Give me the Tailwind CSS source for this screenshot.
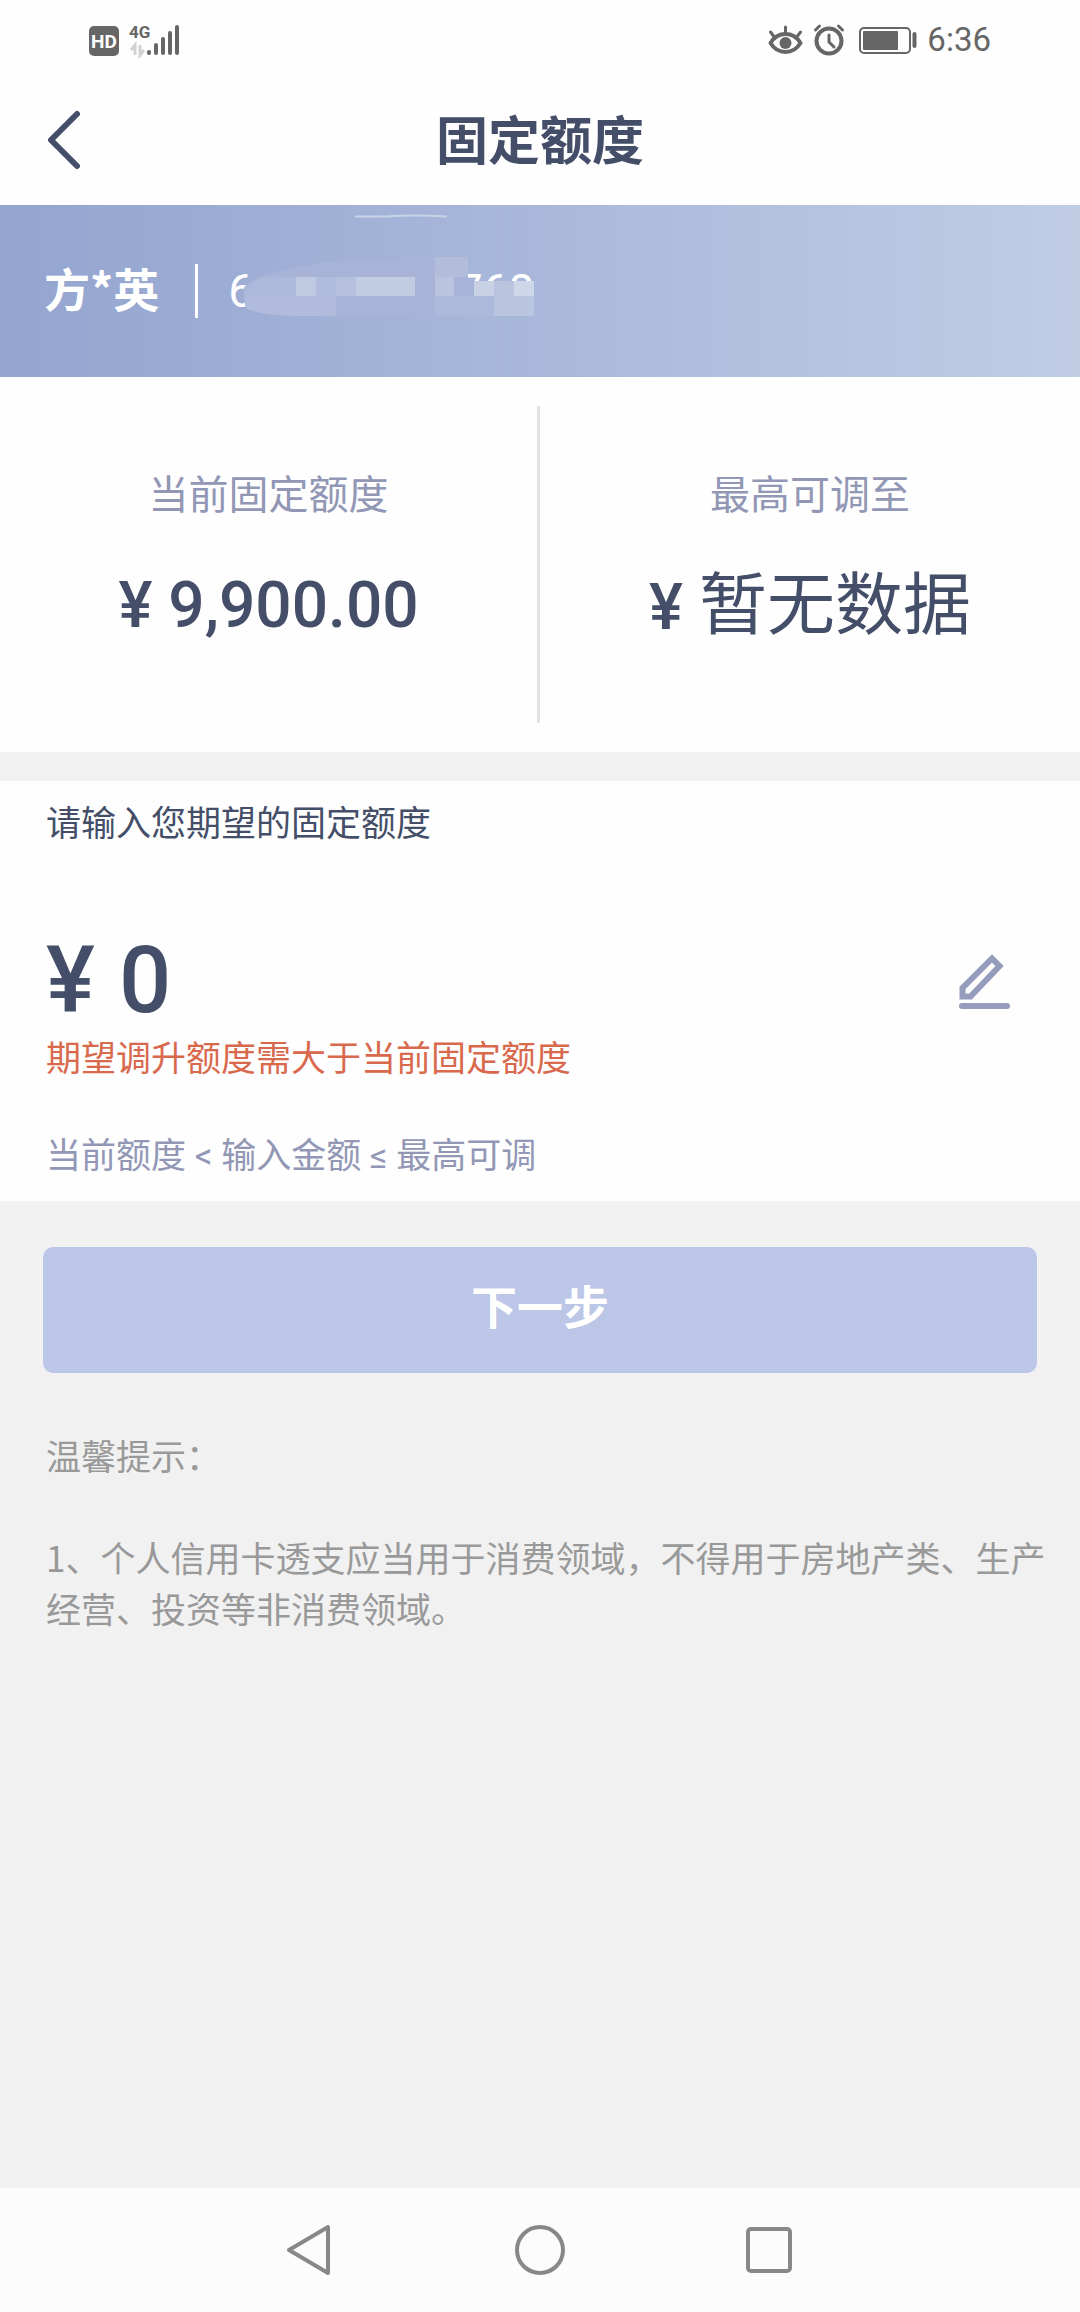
<!DOCTYPE html>
<html lang="zh-CN">
<head>
<meta charset="utf-8">
<meta name="viewport" content="width=device-width, initial-scale=1">
<title>固定额度</title>
<script src="https://cdn.jsdelivr.net/npm/@tailwindcss/browser@4"></script>
</head>
<body class="flex min-h-screen flex-col bg-[#f1f1f1] font-['Noto_Sans_CJK_SC',sans-serif] text-[#444e68]">

<!-- Status bar -->
<div class="flex h-20 items-center justify-between bg-[#fefefe] pr-[89px] pl-[88px] text-[#666]">
  <svg class="h-10 w-24" viewBox="88 20 96 40" fill="currentColor" role="img" aria-label="HD 4G">
    <rect x="89" y="26" width="30" height="30" rx="5"/>
    <text x="104" y="48" text-anchor="middle" font-family="Roboto, sans-serif" font-weight="700" font-size="19" fill="#fefefe">HD</text>
    <text x="129" y="38" font-family="Roboto, sans-serif" font-weight="700" font-size="17">4G</text>
    <path d="M135 55V45l-4 5M140 45v10l4-5" fill="none" stroke="#d2d2d2" stroke-width="3"/>
    <path d="M149 52v1M156 45v8M163 39v14M170 33v20M177 27v26" stroke="currentColor" stroke-width="4" stroke-linecap="round"/>
  </svg>
  <div class="flex items-center gap-2">
    <svg class="h-10 w-[152px]" viewBox="767 20 152 40" fill="none" stroke="currentColor" stroke-width="3" stroke-linecap="round" role="img" aria-label="护眼 闹钟 电池">
      <path d="M770.500 43Q776 34 785.500 34T800.500 43Q795 52 785.500 52T770.500 43Z" stroke-width="4" stroke-linejoin="round"/>
      <circle cx="785.500" cy="43" r="6" fill="currentColor" stroke="none"/>
      <path d="M785.500 33v-6M773.500 36l-3-4M797.500 36l3-4"/>
      <circle cx="829" cy="41" r="12.500" stroke-width="4"/>
      <path d="M829 35v7l5 5M815.500 30l4-4M842.500 30l-4-4"/>
      <rect x="860" y="28" width="50" height="25" rx="4" stroke-width="2"/>
      <rect x="863" y="31" width="35" height="19" rx="1" fill="currentColor" stroke="none"/>
      <path d="M914.500 34v12" stroke-width="4"/>
    </svg>
    <time class="font-[Roboto,sans-serif] text-[33px] leading-10">6:36</time>
  </div>
</div>

<!-- Title bar -->
<header class="grid h-[125px] grid-cols-[1fr_auto_1fr] items-center bg-[#fefefe] px-10 pb-2.5">
  <button type="button" aria-label="返回" class="size-16 justify-self-start">
    <svg class="size-16" viewBox="0 0 64 64" fill="none" stroke="currentColor" stroke-width="6" stroke-linecap="round" stroke-linejoin="round"><path d="M37 8 11 34 37 60"/></svg>
  </button>
  <h1 class="text-[52px] leading-[64px] font-bold">固定额度</h1>
</header>

<main class="flex-1">
  <!-- Card holder -->
  <section class="relative flex h-[172px] items-center bg-linear-to-r from-[#93a4cf] to-[#c0cde5] pl-11 text-white">
    <strong class="pb-2 text-[46px] leading-[60px] font-bold">方*英</strong>
    <span class="ml-9 h-[54px] w-[3px] bg-white"></span>
    <span class="ml-[30px] flex w-[306px] justify-between font-[Roboto,sans-serif] text-[46px] leading-[60px]"><span>6</span><span>768</span></span>
    <!-- Masked digits -->
    <svg class="absolute top-0 left-0 h-[172px] w-[560px]" viewBox="0 0 560 172" aria-hidden="true">
      <path d="M355 11.500h30q30-2 62 0" fill="none" stroke="#c9d3e8" stroke-width="2"/>
      <path d="M244 94Q243 76 262 71Q320 53 400 53H435V52H468V76H533V111H295Q258 110 246 103Z" fill="#a7b4d8"/>
      <path d="M244 91V82L262 72H296V111Q258 110 246 103Z" fill="#acb9da"/>
      <path d="M435 52h33v20h-33z" fill="#b1bddb"/>
      <path d="M296 72h20v19h-20z" fill="#bfc9e1"/>
      <path d="M316 72h20v19h-20z" fill="#b0bcdb"/>
      <path d="M336 72h20v19h-20z" fill="#b5c0dd"/>
      <path d="M356 72h59v19h-59z" fill="#c1cbe2"/>
      <path d="M435 72h19v19h-19z" fill="#b9c4df"/>
      <path d="M247 91h89v20h-41q-37-1-48-8z" fill="#b1bcdc"/>
      <path d="M435 91h59v20h-59z" fill="#adb9da"/>
      <path d="M474 76h20v15h-20z" fill="#c8d1e6"/>
      <path d="M494 76h20v15h-20z" fill="#b9c5df"/>
      <path d="M514 76h20v15h-20z" fill="#ced7e9"/>
      <path d="M494 91h40v20h-40z" fill="#bac5df"/>
    </svg>
  </section>

  <!-- Limits -->
  <section class="grid grid-cols-2 bg-[#fefefe] py-[29px] text-center">
    <div class="flex h-[317px] flex-col items-center gap-[46px] border-r-3 border-[#e3e3e6] pt-[58px]">
      <h2 class="text-[40px] leading-[56px] text-[#9297b5]">当前固定额度</h2>
      <p class="font-[Roboto,'Noto_Sans_CJK_SC',sans-serif] text-[64px] leading-[80px] font-medium">¥ 9,900.00</p>
    </div>
    <div class="flex h-[317px] flex-col items-center gap-[46px] pt-[58px]">
      <h2 class="text-[40px] leading-[56px] text-[#9297b5]">最高可调至</h2>
      <p class="font-[Roboto,'Noto_Sans_CJK_SC',sans-serif] text-[64px] leading-[80px]"><span class="font-medium">¥</span> <span class="text-[68px]">暂无数据</span></p>
    </div>
  </section>

  <form>
    <!-- Requested limit -->
    <section class="mt-[29px] h-[420px] bg-[#fefefe] px-[46px] pt-[14px]">
      <label for="amount" class="block text-[35px] leading-[51px]">请输入您期望的固定额度</label>
      <div class="mt-[86px] flex items-center font-[Roboto,sans-serif] text-[92px] leading-[98px] font-medium">
        <span>¥</span>
        <input id="amount" type="text" inputmode="decimal" value="0" class="ml-6 h-[98px] min-w-0 flex-1 bg-transparent outline-none">
        <button type="button" aria-label="编辑金额" class="mr-5 text-[#969cbc]">
          <svg class="h-[60px] w-[58px]" viewBox="957 953 58 60" fill="none" stroke="currentColor" stroke-width="6"><path d="M963.500 990v8.500h8L1000.500 968l-7.500-7.500z"/><path d="M963 1008h45" stroke-linecap="round"/></svg>
        </button>
      </div>
      <p class="text-[35px] leading-[51px] text-[#d9694d]">期望调升额度需大于当前固定额度</p>
      <p class="mt-[50px] font-[Roboto,'Noto_Sans_CJK_SC',sans-serif] text-[35px] leading-[51px] text-[#9297b5]">当前额度 &lt; 输入金额 ≤ 最高可调</p>
    </section>

    <div class="px-[43px] pt-[46px]">
      <button type="submit" class="h-[126px] w-full rounded-[10px] bg-[#bcc6e6] pb-3 text-[46px] leading-[60px] font-bold text-white">下一步</button>
    </div>
  </form>

  <!-- Notice -->
  <section class="px-[46px] pt-14 pb-10 text-[35px] leading-[51px] text-[#999]">
    <h2>温馨提示：</h2>
    <p class="-mr-4 mt-[51px]">1、个人信用卡透支应当用于消费领域，不得用于房地产类、生产经营、投资等非消费领域。</p>
  </section>
</main>

<!-- System navigation -->
<nav class="flex h-[124px] items-center justify-center gap-[174px] bg-[#fcfcfc] text-[#888]">
  <button type="button" aria-label="返回"><svg class="size-14" viewBox="0 0 56 56" fill="none" stroke="currentColor" stroke-width="4" stroke-linejoin="round"><path d="M46 5V51L7 28Z"/></svg></button>
  <button type="button" aria-label="主页"><svg class="size-14" viewBox="0 0 56 56" fill="none" stroke="currentColor" stroke-width="4"><circle cx="28" cy="28" r="23"/></svg></button>
  <button type="button" aria-label="最近任务"><svg class="size-14" viewBox="0 0 56 56" fill="none" stroke="currentColor" stroke-width="4"><rect x="6" y="7" width="42" height="42" rx="3"/></svg></button>
</nav>
</body>
</html>
